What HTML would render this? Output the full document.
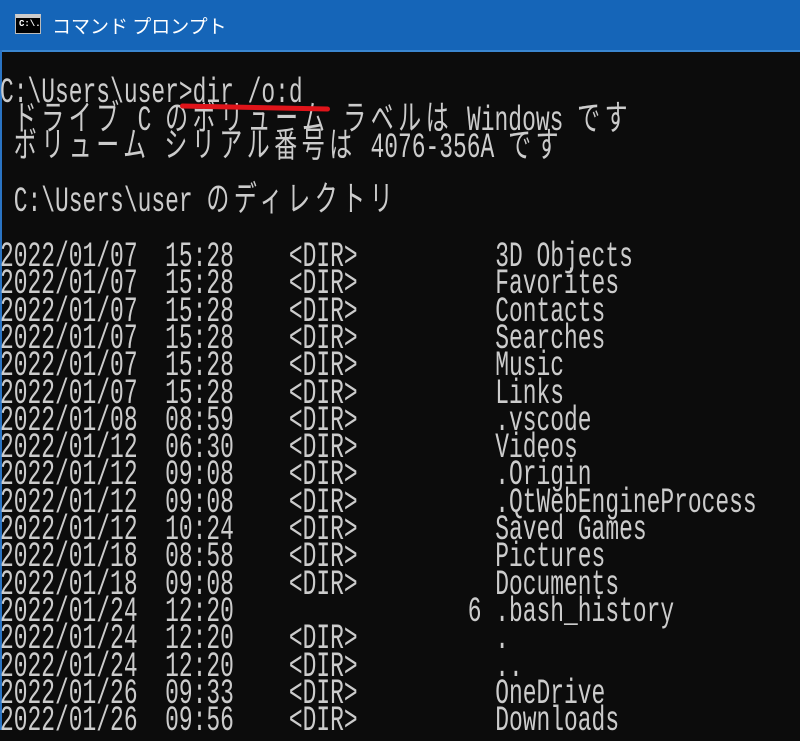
<!DOCTYPE html>
<html><head><meta charset="utf-8"><style>
body{margin:0;width:800px;height:730px;background:#0c0c0c;overflow:hidden;position:relative}
.title{position:absolute;left:0;top:0;width:800px;height:50px;background:#1565b8;border-bottom:2px solid #3a86d0}
.lb{position:absolute;left:0;top:50px;width:2px;height:680px;background:#2a74c4}
.title .t{position:absolute;left:52px;top:12px;color:#fff;font:19px "Noto Sans CJK JP",sans-serif}
.icon{position:absolute;left:15px;top:14px;width:26px;height:20px;background:#000;border:1px solid #bbb;border-top:4px solid #ccc;box-sizing:border-box}
.icon span{position:absolute;left:3px;top:1px;color:#fff;font:bold 9px "Liberation Mono",monospace}
pre{position:absolute;left:0;top:53px;margin:0;color:#cccccc;font-family:"Liberation Mono","Noto Sans CJK JP",monospace;font-size:35px;line-height:27.3px;transform:scaleX(0.655);transform-origin:0 0;white-space:pre}
.j{letter-spacing:7px}
.red{position:absolute;left:180px;top:105px;width:150px;height:5px;background:#e0141a;border-radius:3px;transform:rotate(1.2deg)}
</style></head><body>
<div class="title"><div class="icon"><span>C:\.</span></div><div class="t">コマンド プロンプト</div></div>
<div class="lb"></div>
<pre>&#8203;
C:\Users\user>dir /o:d
 <span class="j">ドライブ</span> C <span class="j">のボリューム</span> <span class="j">ラベルは</span> Windows <span class="j">です</span>
 <span class="j">ボリューム</span> <span class="j">シリアル番号は</span> 4076-356A <span class="j">です</span>

 C:\Users\user <span class="j">のディレクトリ</span>

2022/01/07  15:28    &lt;DIR&gt;          3D Objects
2022/01/07  15:28    &lt;DIR&gt;          Favorites
2022/01/07  15:28    &lt;DIR&gt;          Contacts
2022/01/07  15:28    &lt;DIR&gt;          Searches
2022/01/07  15:28    &lt;DIR&gt;          Music
2022/01/07  15:28    &lt;DIR&gt;          Links
2022/01/08  08:59    &lt;DIR&gt;          .vscode
2022/01/12  06:30    &lt;DIR&gt;          Videos
2022/01/12  09:08    &lt;DIR&gt;          .Origin
2022/01/12  09:08    &lt;DIR&gt;          .QtWebEngineProcess
2022/01/12  10:24    &lt;DIR&gt;          Saved Games
2022/01/18  08:58    &lt;DIR&gt;          Pictures
2022/01/18  09:08    &lt;DIR&gt;          Documents
2022/01/24  12:20                 6 .bash_history
2022/01/24  12:20    &lt;DIR&gt;          .
2022/01/24  12:20    &lt;DIR&gt;          ..
2022/01/26  09:33    &lt;DIR&gt;          OneDrive
2022/01/26  09:56    &lt;DIR&gt;          Downloads
</pre>
<div class="red"></div>
</body></html>
